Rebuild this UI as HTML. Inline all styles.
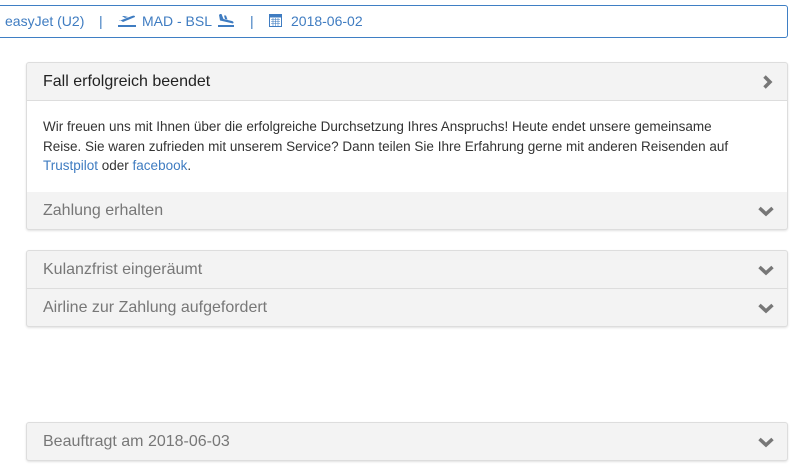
<!DOCTYPE html>
<html><head><meta charset="utf-8"><style>
body{margin:0;width:800px;height:475px;background:#fff;font-family:"Liberation Sans",Arial,sans-serif;position:relative;overflow:hidden}
.top{position:absolute;left:-6px;top:5px;width:792px;height:31px;border:1px solid #3f7fc4;border-radius:3px;color:#3f7cc1;font-size:14px}
.top span{position:absolute;top:7px;white-space:nowrap}
.panel{position:absolute;left:26px;width:760px;border:1px solid #ddd;border-radius:3px;box-shadow:0 1px 2px rgba(0,0,0,.12);background:#f3f3f3}
.row{height:37px;line-height:37px;padding-left:16px;font-size:16px;color:#777;position:relative;border-top:1px solid #ddd}
.row:first-child{border-top:none}
.chev{position:absolute;right:13px;top:14px}
.body{background:#fff;padding:16px 16px 0 16px;height:75px;font-size:13.5px;line-height:19.5px;color:#333;border-top:1px solid #ddd;white-space:nowrap}
.body a{color:#3f7cc1;text-decoration:none}
</style></head><body>
<div class="top">
<span style="left:10px">easyJet (U2)</span>
<span style="left:104px">|</span>
<svg style="position:absolute;left:122px;top:8px" width="20" height="14" viewBox="0 0 20 14"><path d="M2 7 L15 2 Q18 1 18 3 L6 8 L3 6Z M8 4 L5 2 L7 2 L11 3Z" fill="#3f7cc1"/><rect x="1" y="11" width="18" height="2" fill="#3f7cc1"/></svg>
<span style="left:147px">MAD - BSL</span>
<svg style="position:absolute;left:222px;top:7px" width="18" height="15" viewBox="0 0 18 15"><path d="M3 1 L4.5 1 L6.5 6 L15 8 Q17.5 9 16 10.5 L3 7.5 L2 2Z M7 2.5 L9 2.5 L10.5 6.5 L8 6Z" fill="#3f7cc1"/><rect x="1" y="12" width="16" height="2" fill="#3f7cc1"/></svg>
<span style="left:255px">|</span>
<svg style="position:absolute;left:274px;top:7px" width="13" height="14" viewBox="0 0 13 14"><rect x="0.5" y="1.5" width="12" height="12" fill="none" stroke="#3f7cc1"/><rect x="0.5" y="1.5" width="12" height="3" fill="#3f7cc1"/><path d="M2 6.5h9M2 8.5h9M2 10.5h9M4 5v8M6.5 5v8M9 5v8" stroke="#3f7cc1" stroke-width=".6"/></svg>
<span style="left:296px">2018-06-02</span>
</div>

<div class="panel" style="top:62px">
<div class="row" style="color:#222">Fall erfolgreich beendet<svg class="chev" style="right:14px;top:12px" width="11" height="14" viewBox="0 0 11 14"><path d="M2.5 1.5 L8 7 L2.5 12.5" fill="none" stroke="#777" stroke-width="3.5"/></svg></div>
<div class="body">Wir freuen uns mit Ihnen über die erfolgreiche Durchsetzung Ihres Anspruchs! Heute endet unsere gemeinsame<br>Reise. Sie waren zufrieden mit unserem Service? Dann teilen Sie Ihre Erfahrung gerne mit anderen Reisenden auf<br><a>Trustpilot</a> oder <a>facebook</a>.</div>
<div class="row" style="border-top:none">Zahlung erhalten<svg class="chev" width="16" height="11" viewBox="0 0 16 11"><path d="M1.5 2 L8 8 L14.5 2" fill="none" stroke="#777" stroke-width="3.5"/></svg></div>
</div>

<div class="panel" style="top:250px">
<div class="row">Kulanzfrist eingeräumt<svg class="chev" width="16" height="11" viewBox="0 0 16 11"><path d="M1.5 2 L8 8 L14.5 2" fill="none" stroke="#777" stroke-width="3.5"/></svg></div>
<div class="row">Airline zur Zahlung aufgefordert<svg class="chev" width="16" height="11" viewBox="0 0 16 11"><path d="M1.5 2 L8 8 L14.5 2" fill="none" stroke="#777" stroke-width="3.5"/></svg></div>
</div>

<div class="panel" style="top:422px">
<div class="row">Beauftragt am 2018-06-03<svg class="chev" width="16" height="11" viewBox="0 0 16 11"><path d="M1.5 2 L8 8 L14.5 2" fill="none" stroke="#777" stroke-width="3.5"/></svg></div>
</div>
</body></html>
